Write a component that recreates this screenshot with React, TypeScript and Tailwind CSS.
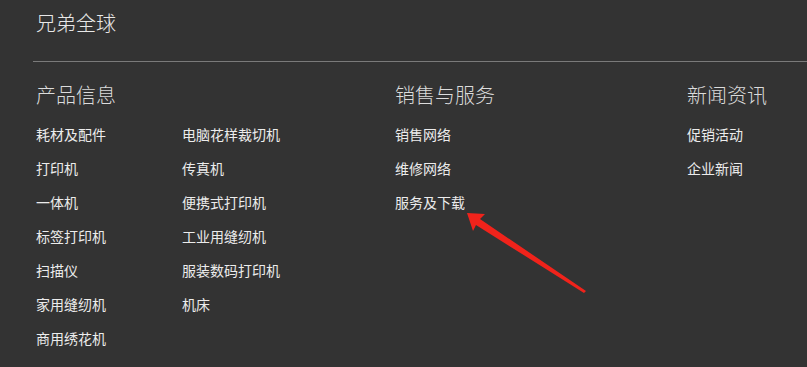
const productLeft = ["耗材及配件", "打印机", "一体机", "标签打印机", "扫描仪", "家用缝纫机", "商用绣花机"];
const productRight = ["电脑花样裁切机", "传真机", "便携式打印机", "工业用缝纫机", "服装数码打印机", "机床"];
const sales = ["销售网络", "维修网络", "服务及下载"];
const news = ["促销活动", "企业新闻"];

const LinkList = ({ items }: { items: string[] }) => (
  <ul className="flex flex-col">
    {items.map((t) => (
      <li key={t} className="h-[34px] text-[14px] leading-[20px] text-[#ececec]">
        <a href="#">{t}</a>
      </li>
    ))}
  </ul>
);

const App = () => {
  return (
    <div
      className="relative w-[807px] h-[367px] overflow-hidden bg-[#333333]"
      style={{ fontFamily: '"Noto Sans CJK SC", "Noto Sans", sans-serif' }}
    >
      {/*Header*/}
      <div className="pl-[36px] pt-[8px] h-[61px]">
        <h2 className="text-[20px] leading-[30px] font-light text-[#e8e8e8]">兄弟全球</h2>
      </div>
      <div className="ml-[33px] h-px bg-[#7a7a7a]" />

      <div className="flex pl-[36px] pt-[18px]">
        {/*产品信息*/}
        <div className="w-[359px]">
          <h3 className="text-[20px] leading-[30px] font-light text-[#dcdcdc]">产品信息</h3>
          <div className="flex mt-[14px]">
            <div className="w-[146px]">
              <LinkList items={productLeft} />
            </div>
            <LinkList items={productRight} />
          </div>
        </div>

        {/*销售与服务*/}
        <div className="w-[292px]">
          <h3 className="text-[20px] leading-[30px] font-light text-[#dcdcdc]">销售与服务</h3>
          <div className="mt-[14px]">
            <LinkList items={sales} />
          </div>
        </div>

        {/*新闻资讯*/}
        <div>
          <h3 className="text-[20px] leading-[30px] font-light text-[#dcdcdc]">新闻资讯</h3>
          <div className="mt-[14px]">
            <LinkList items={news} />
          </div>
        </div>
      </div>

      {/*annotation arrow*/}
      <svg className="absolute left-0 top-0 pointer-events-none" width="807" height="367">
        <polygon
          points="467,213 485,214 480,219 586,291 584,293 476,225 473,231"
          fill="#f0231b"
        />
      </svg>
    </div>
  );
};

export default App;
